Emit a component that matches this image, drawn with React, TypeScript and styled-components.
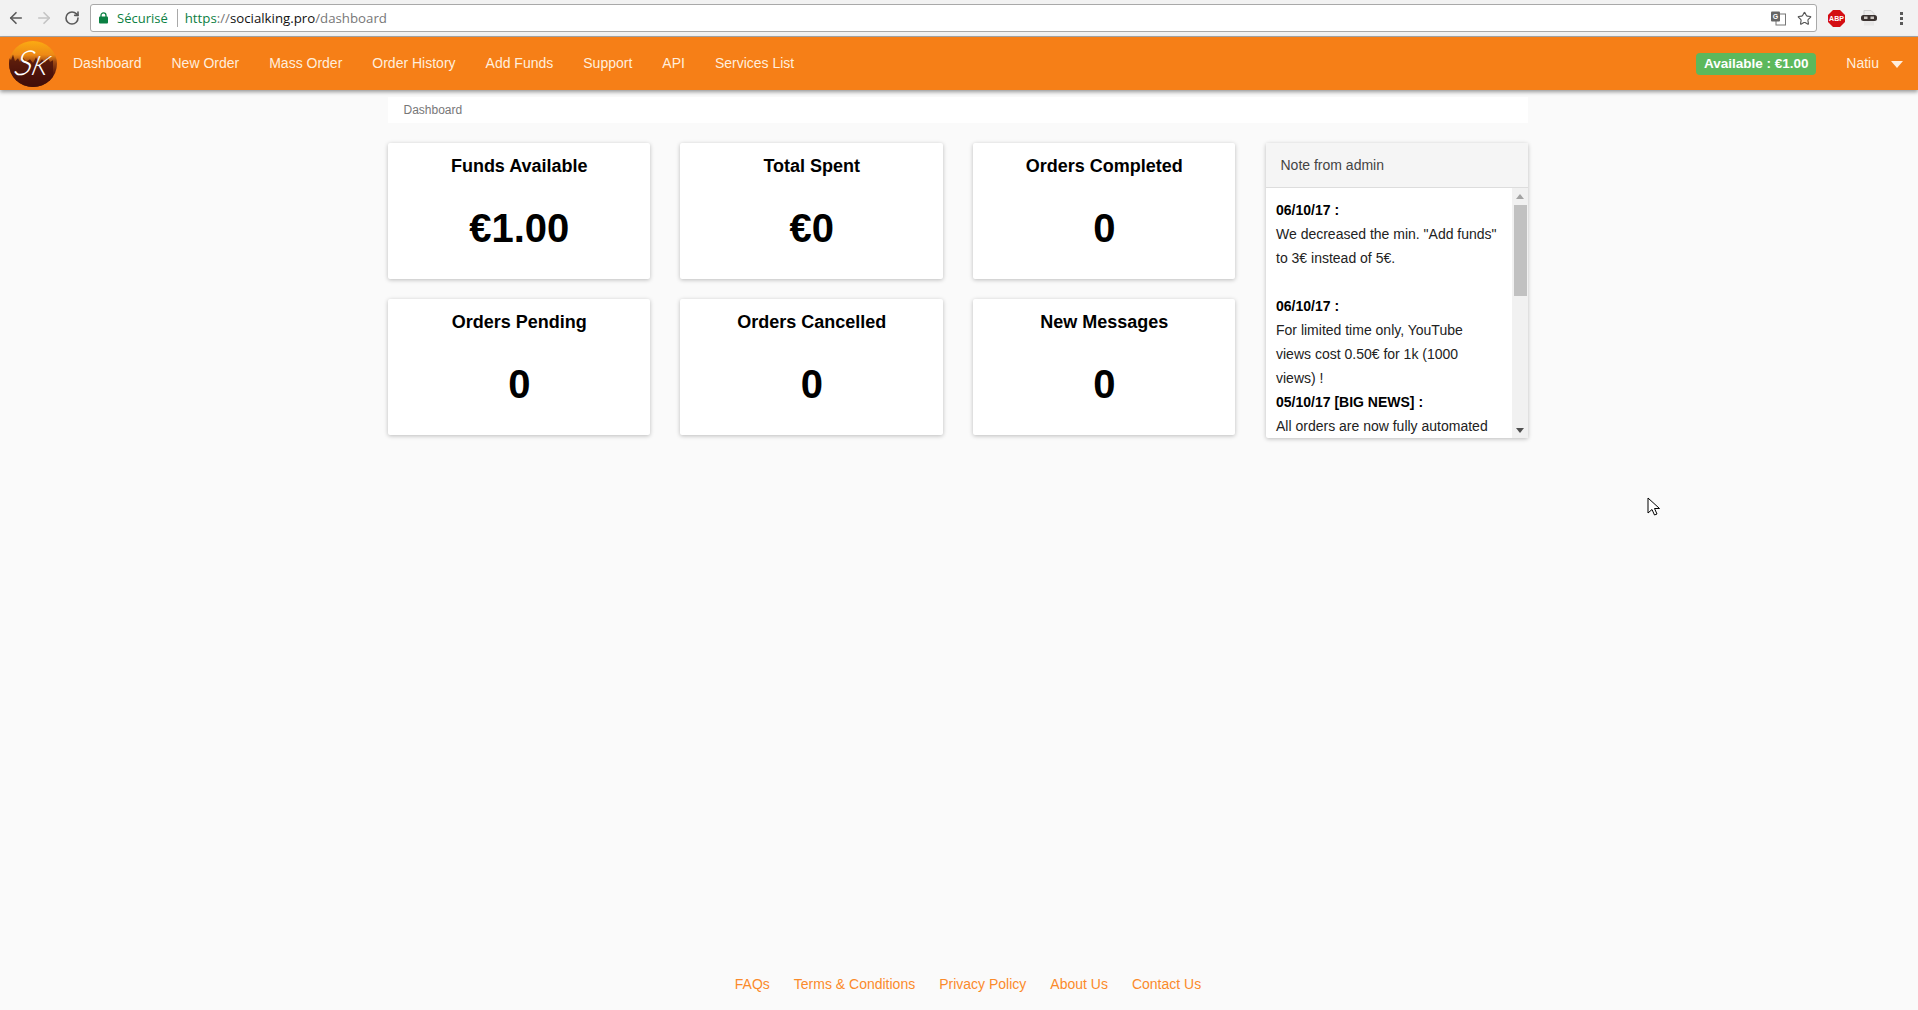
import React from "react";
import styled, { createGlobalStyle } from "styled-components";
import { ArrowLeft, ArrowRight, RotateCw, Star } from "lucide-react";

const Global = createGlobalStyle`
  html, body { margin: 0; padding: 0; height: 100%; overflow: hidden; }
  body { background: #fafafa; font-family: "Liberation Sans", Arial, sans-serif; font-size: 14px; color: #333; }
  #root { height: 100%; }
`;

const Screen = styled.div`
  height: 100vh;
  display: flex;
  flex-direction: column;
  position: relative;
`;

const BrowserBar = styled.div`
  height: 36px;
  flex: none;
  display: flex;
  align-items: center;
  background: #f2f2f2;
  border-bottom: 1px solid #a8a8a8;
  padding: 0 0 0 2px;
  color: #5a5a5a;
`;

const NavIcon = styled.span<{ $muted?: boolean }>`
  width: 28px;
  display: flex;
  justify-content: center;
  color: ${(p) => (p.$muted ? "#c4c4c4" : "#5a5a5a")};
`;

const Omnibox = styled.div`
  margin-left: 4px;
  width: 1727px;
  height: 28px;
  box-sizing: border-box;
  background: #fff;
  border: 1px solid #a9a9a9;
  border-radius: 3px;
  display: flex;
  align-items: center;
  padding: 0 4px 0 8px;
  font-family: "Open Sans", "Noto Sans", sans-serif;
  font-size: 13px;
`;

const Secure = styled.span`
  color: #0b8043;
  margin-left: 9px;
  padding-right: 9px;
  margin-right: 7px;
  border-right: 1px solid #a9a9a9;
  line-height: 18px;
`;

const Url = styled.span`
  color: #777;
  font-size: 13.25px;
`;
const UrlScheme = styled.span`
  color: #0b8043;
`;
const UrlHost = styled.span`
  color: #111;
`;

const OmniActions = styled.div`
  margin-left: auto;
  display: flex;
  align-items: center;
  gap: 11px;
  color: #555;
`;

const Extensions = styled.div`
  display: flex;
  align-items: center;
  gap: 16px;
  margin-left: 11px;
`;

const MenuDots = styled.span`
  width: 3px;
  height: 13px;
  margin-left: 7px;
  background: radial-gradient(circle at 1.5px 1.5px, #5a5a5a 1.5px, transparent 1.6px) 0 0 / 3px 5px;
`;

const Navbar = styled.nav`
  height: 53px;
  flex: none;
  background: #f67f17;
  box-shadow: 0 2px 4px rgba(0, 0, 0, 0.4);
  display: flex;
  align-items: center;
  padding: 0 15px 0 9px;
  position: relative;
`;

const Logo = styled.svg`
  width: 48px;
  height: 46px;
  margin-right: 16px;
  flex: none;
`;

const NavLinks = styled.div`
  display: flex;
  gap: 30px;
  margin-bottom: 2px;
`;

const NavLink = styled.a`
  color: #ffeedd;
  font-size: 14px;
`;

const NavRight = styled.div`
  margin-left: auto;
  display: flex;
  align-items: center;
`;

const Balance = styled.span`
  background: #5cb85c;
  color: #fff;
  font-weight: bold;
  font-size: 13.5px;
  height: 22px;
  line-height: 22px;
  width: 120px;
  text-align: center;
  border-radius: 4px;
  margin-right: 30px;
`;

const UserName = styled.span`
  color: #ffeedd;
  margin-right: 12px;
  margin-bottom: 2px;
`;

const Caret = styled.span`
  width: 0;
  height: 0;
  border-left: 6px solid transparent;
  border-right: 6px solid transparent;
  border-top: 7px solid #ffeedd;
  margin-top: 1px;
`;

const Main = styled.main`
  flex: 1;
  width: 1140px;
  margin-left: calc(50% - 571.5px);
  padding-top: 7px;
`;

const Breadcrumb = styled.div`
  height: 26px;
  line-height: 27px;
  background: #fff;
  padding-left: 16px;
  font-size: 12px;
  color: #777;
`;

const Content = styled.div`
  display: flex;
  gap: 30.5px;
  margin-top: 20px;
  align-items: flex-start;
`;

const StatGrid = styled.div`
  flex: 1;
  display: grid;
  grid-template-columns: repeat(3, 262.5px);
  gap: 20px 30px;
`;

const StatCard = styled.section`
  height: 136px;
  background: #fff;
  border-radius: 2px;
  box-shadow: 0 1px 4px rgba(0, 0, 0, 0.25);
  text-align: center;
  color: #000;
  font-weight: bold;
  padding: 13px 0 0 1px;
  box-sizing: border-box;
`;

const StatTitle = styled.div`
  font-size: 18px;
  line-height: 20px;
`;

const StatValue = styled.div`
  font-size: 40px;
  line-height: 44px;
  margin-top: 30px;
`;

const NotePanel = styled.aside`
  width: 262px;
  height: 295px;
  flex: none;
  background: #fff;
  border-radius: 2px;
  box-shadow: 0 1px 4px rgba(0, 0, 0, 0.25);
  display: flex;
  flex-direction: column;
`;

const NoteHeader = styled.div`
  height: 45px;
  flex: none;
  box-sizing: border-box;
  line-height: 45px;
  background: #f5f5f5;
  border-bottom: 1px solid #ddd;
  padding-left: 15px;
  color: #444;
`;

const NoteRow = styled.div`
  flex: 1;
  min-height: 0;
  display: flex;
`;

const NoteBody = styled.div`
  flex: 1;
  min-width: 0;
  overflow: hidden;
  padding: 10px 12px 0 10.5px;
  line-height: 24px;
  color: #222;
`;

const ScrollTrack = styled.div`
  width: 16px;
  flex: none;
  background: #f1f1f1;
  display: flex;
  flex-direction: column;
  align-items: center;
`;

const ScrollButton = styled.div`
  height: 16px;
  width: 100%;
  flex: none;
  display: flex;
  align-items: center;
  justify-content: center;
`;

const ArrowUp = styled.span`
  border-left: 4.5px solid transparent;
  border-right: 4.5px solid transparent;
  border-bottom: 5px solid #a3a3a3;
`;

const ArrowDown = styled.span`
  border-left: 4.5px solid transparent;
  border-right: 4.5px solid transparent;
  border-top: 5px solid #505050;
`;

const ScrollThumb = styled.div`
  width: 13px;
  height: 91px;
  margin: 1px 0 0 1px;
  flex: none;
  background: #c1c1c1;
`;

const ScrollRest = styled.div`
  flex: 1;
`;

const NoteDate = styled.div`
  font-weight: bold;
  color: #000;
`;

const NoteText = styled.div``;

const NoteGap = styled.div`
  height: 24px;
`;

const Footer = styled.footer`
  flex: none;
  display: flex;
  justify-content: center;
  gap: 24px;
  height: 34px;
  padding-left: 18px;
  color: #fa8a2a;
`;

const FooterLink = styled.a`
  line-height: 16px;
`;

const Pointer = styled.svg`
  position: absolute;
  left: 1647px;
  top: 497px;
`;

const nav = ["Dashboard", "New Order", "Mass Order", "Order History", "Add Funds", "Support", "API", "Services List"];
const stats: [string, string][] = [
  ["Funds Available", "€1.00"],
  ["Total Spent", "€0"],
  ["Orders Completed", "0"],
  ["Orders Pending", "0"],
  ["Orders Cancelled", "0"],
  ["New Messages", "0"],
];
const foot = ["FAQs", "Terms & Conditions", "Privacy Policy", "About Us", "Contact Us"];

export default function App() {
  return (
    <Screen>
      <Global />
      <BrowserBar>
        <NavIcon><ArrowLeft size={18} strokeWidth={2.2} /></NavIcon>
        <NavIcon $muted><ArrowRight size={18} strokeWidth={2.2} /></NavIcon>
        <NavIcon><RotateCw size={16} strokeWidth={2.4} /></NavIcon>
        <Omnibox>
          <svg width="9" height="12" viewBox="0 0 9 12">
            <path d="M2 5V3.400a2.500 2.500 0 0 1 5 0V5" fill="none" stroke="#0b8043" strokeWidth="1.3" />
            <rect x="0" y="4.600" width="9" height="7" rx="1" fill="#0b8043" />
          </svg>
          <Secure>Sécurisé</Secure>
          <Url>
            <UrlScheme>https</UrlScheme>://<UrlHost>socialking.pro</UrlHost>/dashboard
          </Url>
          <OmniActions>
            <svg width="15" height="15" viewBox="0 0 15 15">
              <rect x="5" y="3" width="9.500" height="11" fill="#fff" stroke="#777" />
              <rect x="0" y="0.500" width="9" height="10" rx="1" fill="#666" />
              <text x="4.500" y="8" fontSize="7" fontWeight="bold" fill="#fff" textAnchor="middle" fontFamily="Liberation Sans">G</text>
            </svg>
            <Star size={15} strokeWidth={1.8} />
          </OmniActions>
        </Omnibox>
        <Extensions>
          <svg width="17" height="17" viewBox="0 0 17 17">
            <path d="M5 0h7l5 5v7l-5 5H5l-5-5V5z" fill="#d40d12" />
            <text x="8.500" y="11" fontSize="7" fontWeight="bold" fill="#fff" textAnchor="middle" fontFamily="Liberation Sans">ABP</text>
          </svg>
          <svg width="16" height="16" viewBox="0 0 16 16">
            <path d="M3 6V0.500h7l3 3V6z" fill="#ececec" stroke="#cfcfcf" />
            <rect x="0" y="5" width="16" height="6" rx="2.500" fill="#3a3230" />
            <rect x="3" y="6.500" width="3.500" height="2.500" fill="#c9c4bf" />
            <rect x="9.500" y="6.500" width="3.500" height="2.500" fill="#c9c4bf" />
            <path d="M3 11h10v4.500H3z" fill="#e8e8e8" />
          </svg>
          <MenuDots />
        </Extensions>
      </BrowserBar>
      <Navbar>
        <Logo viewBox="0 0 48 48" preserveAspectRatio="none">
          <defs>
            <linearGradient id="sky" x1="0" y1="0" x2="0" y2="1">
              <stop offset="0" stopColor="#fbab12" />
              <stop offset="0.3" stopColor="#ee8a16" />
              <stop offset="0.45" stopColor="#a04a12" />
              <stop offset="0.7" stopColor="#5a1a0c" />
              <stop offset="1" stopColor="#220404" />
            </linearGradient>
            <clipPath id="disc"><circle cx="24" cy="24" r="24" /></clipPath>
          </defs>
          <circle cx="24" cy="24" r="24" fill="url(#sky)" />
          <path clipPath="url(#disc)" d="M0 17l2 3 2-6 2 7 3-3 2 4 3-5 3 5 4-3 3 4 3-6 3 6 3-4 3 4 3-6 2 5 3-2v37H0z" fill="#4a120a" opacity="0.8" />
          <g transform="translate(6 0) skewX(-14)">
            <text x="16" y="36" fontSize="36" fontStyle="italic" fontWeight="300" fill="#fff" textAnchor="middle" fontFamily="Lato">S</text>
            <text x="32" y="35" fontSize="28" fontStyle="italic" fontWeight="300" fill="#fff" textAnchor="middle" fontFamily="Lato">K</text>
          </g>
        </Logo>
        <NavLinks>
          {nav.map((n) => <NavLink key={n}>{n}</NavLink>)}
        </NavLinks>
        <NavRight>
          <Balance>Available : €1.00</Balance>
          <UserName>Natiu</UserName>
          <Caret />
        </NavRight>
      </Navbar>
      <Main>
        <Breadcrumb>Dashboard</Breadcrumb>
        <Content>
          <StatGrid>
            {stats.map(([t, v]) => (
              <StatCard key={t}>
                <StatTitle>{t}</StatTitle>
                <StatValue>{v}</StatValue>
              </StatCard>
            ))}
          </StatGrid>
          <NotePanel>
            <NoteHeader>Note from admin</NoteHeader>
            <NoteRow>
              <NoteBody>
                <NoteDate>06/10/17 :</NoteDate>
                <NoteText>We decreased the min. "Add funds" to 3€ instead of 5€.</NoteText>
                <NoteGap />
                <NoteDate>06/10/17 :</NoteDate>
                <NoteText>For limited time only, YouTube views cost 0.50€ for 1k (1000 views) !</NoteText>
                <NoteDate>05/10/17 [BIG NEWS] :</NoteDate>
                <NoteText>All orders are now fully automated</NoteText>
              </NoteBody>
              <ScrollTrack>
                <ScrollButton><ArrowUp /></ScrollButton>
                <ScrollThumb />
                <ScrollRest />
                <ScrollButton><ArrowDown /></ScrollButton>
              </ScrollTrack>
            </NoteRow>
          </NotePanel>
        </Content>
      </Main>
      <Footer>
        {foot.map((f) => <FooterLink key={f}>{f}</FooterLink>)}
      </Footer>
      <Pointer width="13" height="20" viewBox="0 0 13 20">
        <path d="M1 1v15l4-3.500 2.500 5.500 2.500-1-2.500-5.500h5z" fill="#fff" stroke="#000" strokeWidth="1" />
      </Pointer>
    </Screen>
  );
}
